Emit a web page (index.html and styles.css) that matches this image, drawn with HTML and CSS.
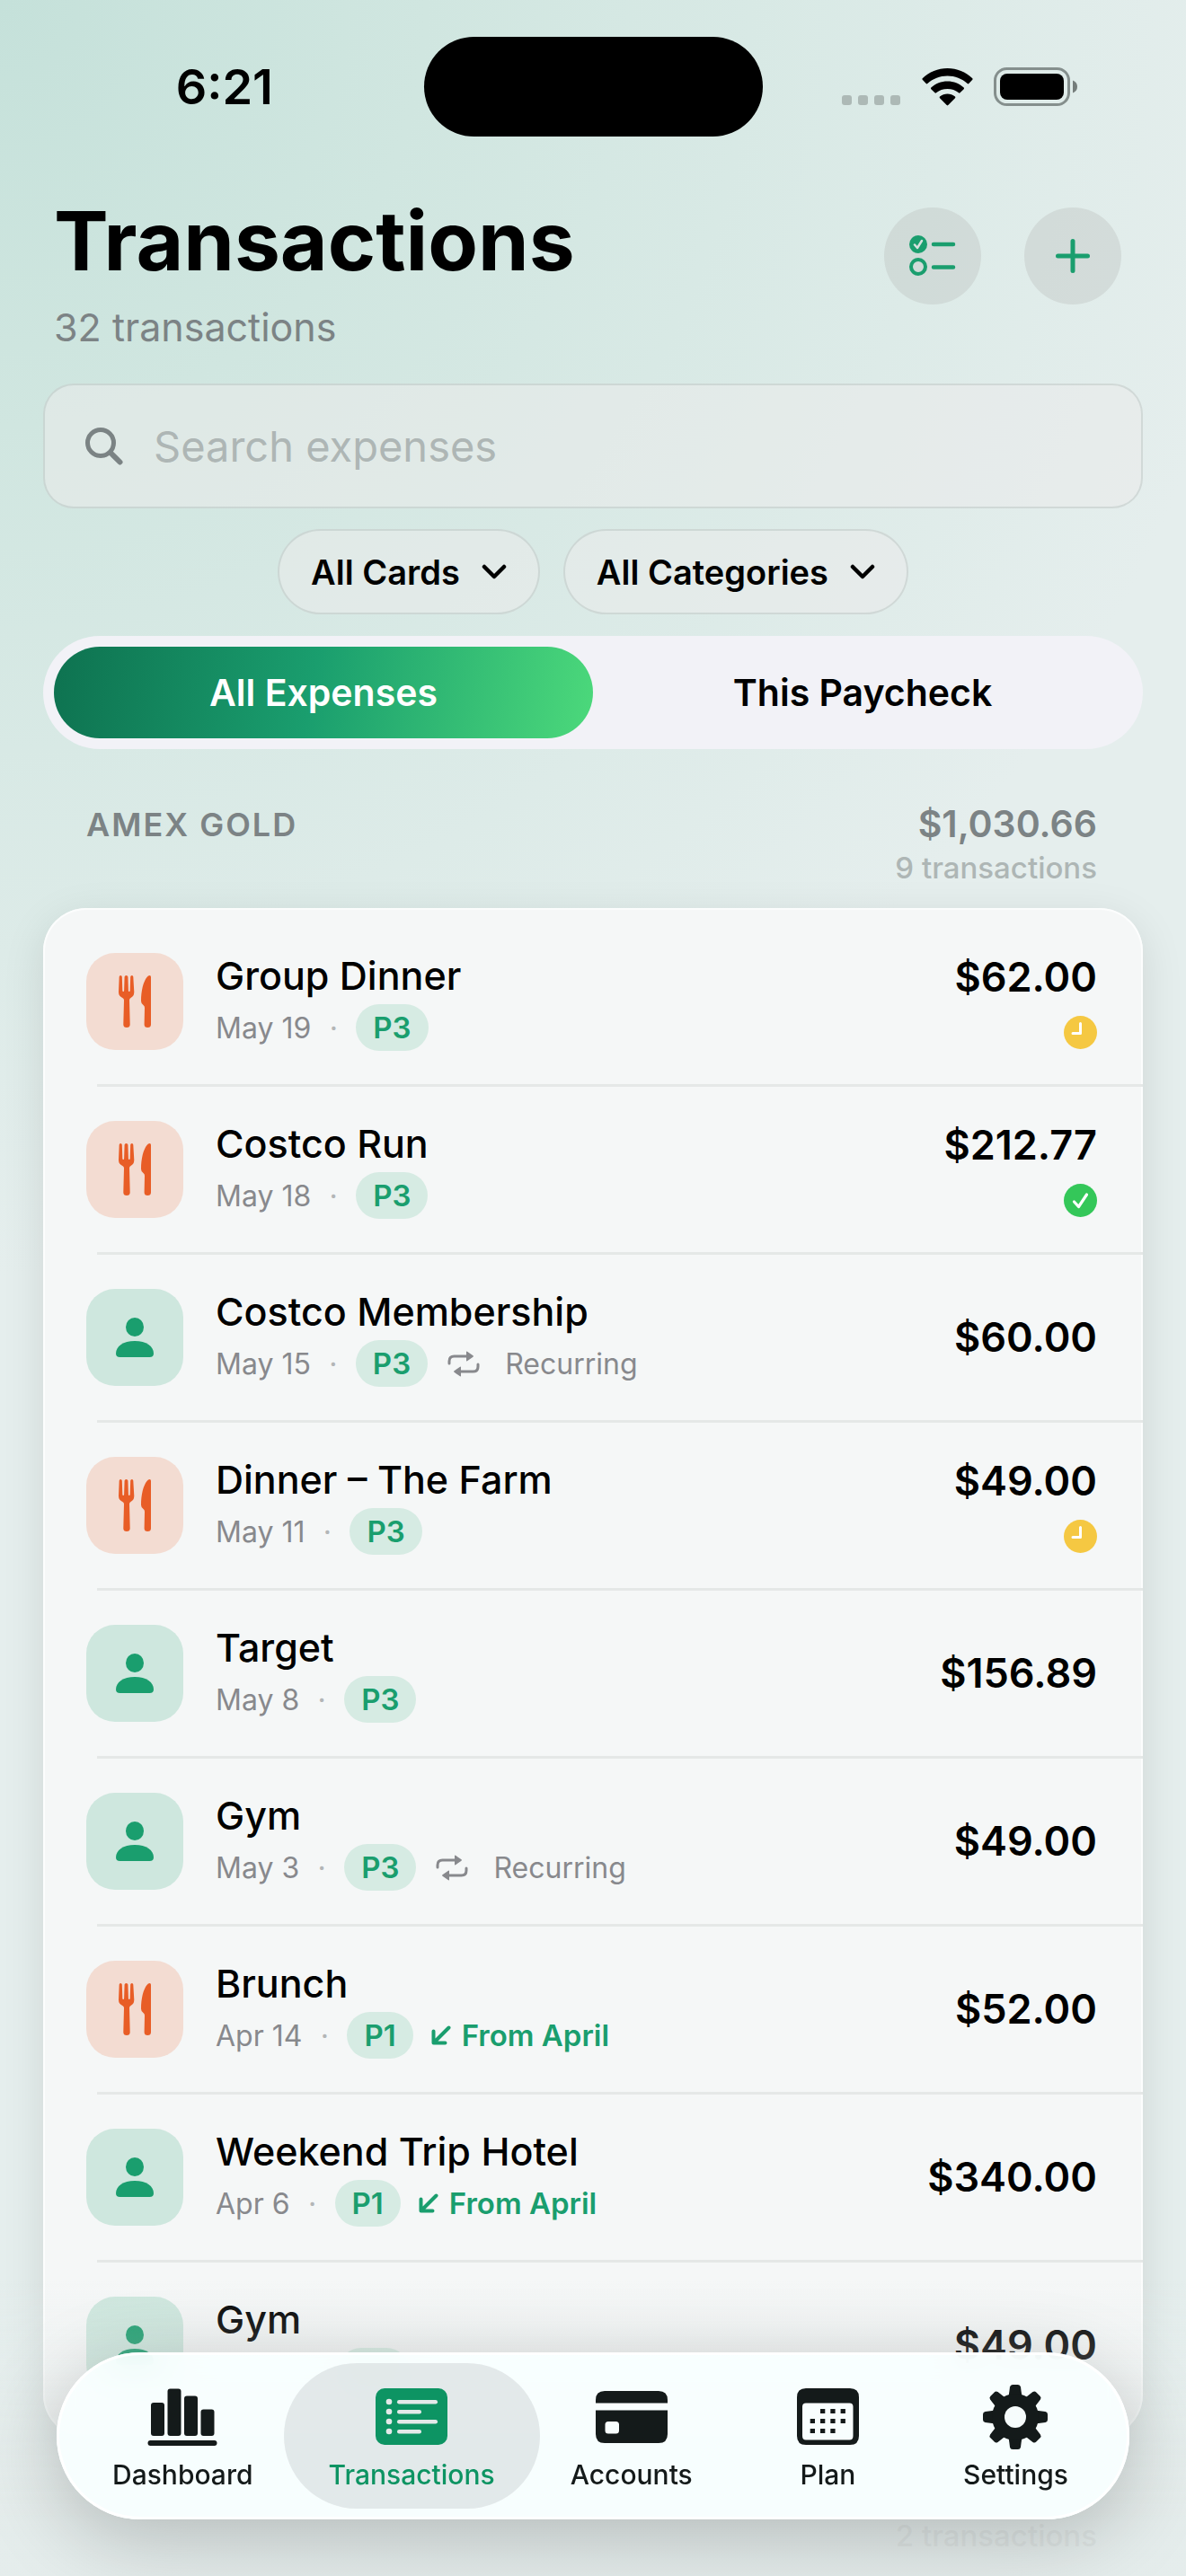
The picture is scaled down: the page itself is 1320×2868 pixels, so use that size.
FILE: index.html
```html
<!DOCTYPE html>
<html lang="en">
<head>
  <meta charset="UTF-8" />
  <title>Transactions</title>
  <meta name="viewport" content="width=device-width, initial-scale=1" />
  <link rel="stylesheet" href="styles.css">
</head>
<body>
  <!-- Icon sprite -->
  <svg class="sprite" aria-hidden="true">
    <symbol id="fork-knife" viewBox="0 0 36 58">
      <path d="M2.2 0Q3.6 0 3.8 1.600L4.300 17Q4.400 18 5.200 18Q6 18 6.100 17L6.600 1.600Q6.800 0 8.500 0Q10.200 0 10.400 1.600L10.900 17Q11 18 11.800 18Q12.600 18 12.700 17L13.200 1.600Q13.400 0 14.800 0Q16.200 0 16.300 1.600L17.300 18.500Q17.300 23 13.500 25Q12 25.800 12 27.500L12.700 54.500Q12.700 58 9 58Q5.300 58 5.300 54.500L6 27.500Q6 25.800 4.300 25Q0 23 0 18.500L.7 1.600Q.8 0 2.200 0Z" fill="currentColor"/>
      <path d="M34.500 0Q36 0 36 1.800V54.500Q36 58 32.300 58Q28.600 58 28.600 54.500L29 36Q29 34.200 27.500 33Q25 31.500 25 28.500C25 17 27.500 7 31.500 2Q33 0 34.500 0Z" fill="currentColor"/>
    </symbol>
    <symbol id="person" viewBox="0 0 42 44">
      <ellipse cx="21" cy="10.500" rx="10" ry="10.500" fill="currentColor"/>
      <path d="M4.500 44Q0 44 0 40C0 32 8 26 21 26S42 32 42 40Q42 44 37.500 44Z" fill="currentColor"/>
    </symbol>
    <symbol id="repeat" viewBox="0 0 36 29">
      <path d="M2 14V11.500Q2 6 7.500 6H22M34 15V17.500Q34 23 28.500 23H14" fill="none" stroke="currentColor" stroke-width="3" stroke-linecap="round"/>
      <path d="M21 1.200Q21 0 22 .7L28.500 5.300Q29.300 6 28.500 6.700L22 11.300Q21 12 21 10.800ZM15 18.200Q15 17 14 17.700L7.500 22.300Q6.700 23 7.500 23.700L14 28.300Q15 29 15 27.800Z" fill="currentColor"/>
    </symbol>
    <symbol id="arrow-dl" viewBox="0 0 22 22">
      <path d="M19.500 2.500L3 19M2.500 6.500V19.500H15.500" fill="none" stroke="currentColor" stroke-width="4" stroke-linecap="round" stroke-linejoin="round"/>
    </symbol>
    <symbol id="chevron" viewBox="0 0 28 18">
      <path d="M3 3L14 14L25 3" fill="none" stroke="currentColor" stroke-width="4.500" stroke-linecap="round" stroke-linejoin="round"/>
    </symbol>
    <symbol id="clock" viewBox="0 0 37 37">
      <circle cx="18.500" cy="18.500" r="18.500" fill="#f5c842"/>
      <path d="M18.500 8.500V19.500H10" fill="none" stroke="#fff" stroke-width="3" stroke-linecap="round" stroke-linejoin="round"/>
    </symbol>
    <symbol id="check" viewBox="0 0 37 37">
      <circle cx="18.500" cy="18.500" r="18.500" fill="#34c759"/>
      <path d="M11.500 20L16.500 25.500L25.500 12" fill="none" stroke="#fff" stroke-width="3.200" stroke-linecap="round" stroke-linejoin="round"/>
    </symbol>
  </svg>

  <div class="status-bar">
    <span class="time">6:21</span>
    <span class="island"></span>
    <span class="status-icons">
      <svg width="66" height="12" viewBox="0 0 66 12" class="cell"><g fill="#adb9b6"><rect width="11" height="11" rx="3"/><rect x="18" width="11" height="11" rx="3"/><rect x="36" width="11" height="11" rx="3"/><rect x="54" width="11" height="11" rx="3"/></g></svg>
      <svg width="57" height="42" viewBox="0 0 57 42"><path d="M28.500 0C39 0 49 4 56.300 11.200Q57 12 56.300 12.800L52.300 17Q51.500 17.800 50.700 17C44.500 11.500 37 8.500 28.500 8.500S12.500 11.500 6.300 17Q5.500 17.800 4.700 17L.7 12.800Q0 12 .7 11.200C8 4 18 0 28.500 0ZM28.500 14.500C35.500 14.500 41.700 17 46.700 21.500Q47.500 22.300 46.700 23.200L42.500 27.300Q41.700 28 41 27.300C37.500 24.500 33.300 23 28.500 23S19.500 24.500 16 27.300Q15.300 28 14.500 27.300L10.300 23.200Q9.500 22.300 10.300 21.500C15.300 17 21.500 14.500 28.500 14.500ZM28.500 28.500C31.700 28.500 34.500 29.600 37 31.500Q37.800 32.300 37 33.200L29.300 41Q28.500 41.800 27.700 41L20 33.200Q19.200 32.300 20 31.500C22.500 29.600 25.300 28.500 28.500 28.500Z"/></svg>
      <svg width="94" height="43" viewBox="0 0 94 43"><rect x="1.500" y="1.500" width="82" height="40" rx="13" fill="none" stroke="#858f8d" stroke-width="3"/><rect x="7" y="7" width="71" height="29" rx="8"/><path d="M88 14.500Q93 16.500 93 21.500T88 28.500Z" fill="#757d7b"/></svg>
    </span>
  </div>

  <main class="page">
    <header class="page-header">
      <div class="heading">
        <h1>Transactions</h1>
        <p>32 transactions</p>
      </div>
      <div class="actions">
        <button type="button" class="round-btn" aria-label="Select transactions">
          <svg width="54" height="46" viewBox="0 0 54 46"><circle cx="11" cy="10" r="10" fill="#1a9e6e"/><path d="M7 10.500L10 14L15 6" fill="none" stroke="#d6e1de" stroke-width="2.500" stroke-linecap="round" stroke-linejoin="round"/><circle cx="11" cy="35" r="8" fill="none" stroke="#1a9e6e" stroke-width="4"/><path d="M28 10H50M28 35.500H50" stroke="#1a9e6e" stroke-width="4.500" stroke-linecap="round"/></svg>
        </button>
        <button type="button" class="round-btn" aria-label="Add transaction">
          <svg width="38" height="38" viewBox="0 0 38 38"><path d="M19 2.500V35.500M2.500 19H35.500" stroke="#1a9e6e" stroke-width="5" stroke-linecap="round"/></svg>
        </button>
      </div>
    </header>

    <label class="search">
      <svg width="42" height="42" viewBox="0 0 42 42"><circle cx="17" cy="17" r="14.500" fill="none" stroke="#7b8384" stroke-width="5"/><path d="M28 28L38.500 38.500" stroke="#7b8384" stroke-width="6" stroke-linecap="round"/></svg>
      <input type="search" placeholder="Search expenses" aria-label="Search expenses">
    </label>

    <div class="filters">
      <button type="button" class="chip">All Cards <svg width="28" height="18"><use href="#chevron"/></svg></button>
      <button type="button" class="chip">All Categories <svg width="28" height="18"><use href="#chevron"/></svg></button>
    </div>

    <div class="segmented">
      <button type="button" class="segment active">All Expenses</button>
      <button type="button" class="segment">This Paycheck</button>
    </div>

    <section class="group">
      <div class="group-header">
        <h2>Amex Gold</h2>
        <div class="group-total">
          <strong>$1,030.66</strong>
          <span>9 transactions</span>
        </div>
      </div>
      <ul class="card">
        <li class="row">
          <span class="category food"><svg width="36" height="58"><use href="#fork-knife"/></svg></span>
          <div class="details">
            <h3>Group Dinner</h3>
            <p class="meta">May 19 <i>·</i> <b class="pill">P3</b></p>
          </div>
          <div class="amount">$62.00 <svg width="37" height="37"><use href="#clock"/></svg></div>
        </li>
        <li class="row">
          <span class="category food"><svg width="36" height="58"><use href="#fork-knife"/></svg></span>
          <div class="details">
            <h3>Costco Run</h3>
            <p class="meta">May 18 <i>·</i> <b class="pill">P3</b></p>
          </div>
          <div class="amount">$212.77 <svg width="37" height="37"><use href="#check"/></svg></div>
        </li>
        <li class="row">
          <span class="category personal"><svg width="42" height="44"><use href="#person"/></svg></span>
          <div class="details">
            <h3>Costco Membership</h3>
            <p class="meta">May 15 <i>·</i> <b class="pill">P3</b> <span class="recurring"><svg width="36" height="29"><use href="#repeat"/></svg> Recurring</span></p>
          </div>
          <div class="amount">$60.00</div>
        </li>
        <li class="row">
          <span class="category food"><svg width="36" height="58"><use href="#fork-knife"/></svg></span>
          <div class="details">
            <h3>Dinner – The Farm</h3>
            <p class="meta">May 11 <i>·</i> <b class="pill">P3</b></p>
          </div>
          <div class="amount">$49.00 <svg width="37" height="37"><use href="#clock"/></svg></div>
        </li>
        <li class="row">
          <span class="category personal"><svg width="42" height="44"><use href="#person"/></svg></span>
          <div class="details">
            <h3>Target</h3>
            <p class="meta">May 8 <i>·</i> <b class="pill">P3</b></p>
          </div>
          <div class="amount">$156.89</div>
        </li>
        <li class="row">
          <span class="category personal"><svg width="42" height="44"><use href="#person"/></svg></span>
          <div class="details">
            <h3>Gym</h3>
            <p class="meta">May 3 <i>·</i> <b class="pill">P3</b> <span class="recurring"><svg width="36" height="29"><use href="#repeat"/></svg> Recurring</span></p>
          </div>
          <div class="amount">$49.00</div>
        </li>
        <li class="row">
          <span class="category food"><svg width="36" height="58"><use href="#fork-knife"/></svg></span>
          <div class="details">
            <h3>Brunch</h3>
            <p class="meta">Apr 14 <i>·</i> <b class="pill">P1</b> <span class="from"><svg width="22" height="22"><use href="#arrow-dl"/></svg> From April</span></p>
          </div>
          <div class="amount">$52.00</div>
        </li>
        <li class="row">
          <span class="category personal"><svg width="42" height="44"><use href="#person"/></svg></span>
          <div class="details">
            <h3>Weekend Trip Hotel</h3>
            <p class="meta">Apr 6 <i>·</i> <b class="pill">P1</b> <span class="from"><svg width="22" height="22"><use href="#arrow-dl"/></svg> From April</span></p>
          </div>
          <div class="amount">$340.00</div>
        </li>
        <li class="row">
          <span class="category personal"><svg width="42" height="44"><use href="#person"/></svg></span>
          <div class="details">
            <h3>Gym</h3>
            <p class="meta"><b class="pill last"></b></p>
          </div>
          <div class="amount">$49.00</div>
        </li>
      </ul>
    </section>

    <section class="group">
      <div class="group-header">
        <div class="group-total">
          <strong></strong>
          <span>2 transactions</span>
        </div>
      </div>
    </section>
  </main>

  <div class="bottom-fade"></div>

  <nav class="tab-bar">
    <a href="#dashboard" class="tab">
      <svg width="78" height="72" viewBox="0 0 78 72"><g fill="currentColor"><rect x="4" y="20" width="15" height="37" rx="3"/><rect x="22.500" y="4.500" width="15" height="52.500" rx="3"/><rect x="41" y="12.500" width="15" height="44.500" rx="3"/><rect x="59.500" y="27.500" width="15" height="29.500" rx="3"/><rect x=".5" y="62" width="77" height="6" rx="3"/></g></svg>
      Dashboard
    </a>
    <a href="#transactions" class="tab active">
      <svg width="80" height="72" viewBox="0 0 80 72"><rect y="4" width="80" height="63" rx="10" fill="currentColor"/><g fill="#e3e9e9"><circle cx="15" cy="19" r="3.300"/><circle cx="15" cy="30" r="3.300"/><circle cx="15" cy="41" r="3.300"/><circle cx="15" cy="52" r="3.300"/><rect x="24" y="17" width="45" height="4.500" rx="2.200"/><rect x="24" y="28" width="27" height="4.500" rx="2.200"/><rect x="24" y="39" width="45" height="4.500" rx="2.200"/><rect x="24" y="50" width="27" height="4.500" rx="2.200"/></g></svg>
      Transactions
    </a>
    <a href="#accounts" class="tab">
      <svg width="80" height="72" viewBox="0 0 80 72"><path d="M0 20.500V17Q0 7 10 7H70Q80 7 80 17V20.500ZM0 28.500H80V55Q80 65 70 65H10Q0 65 0 55ZM14 41Q10.500 41 10.500 44.500V51Q10.500 54.500 14 54.500H22.500Q26 54.500 26 51V44.500Q26 41 22.500 41Z" fill="currentColor" fill-rule="evenodd"/></svg>
      Accounts
    </a>
    <a href="#plan" class="tab plan">
      <svg width="69" height="72" viewBox="0 0 69 72"><path d="M10 4H59Q69 4 69 14V57Q69 67 59 67H10Q0 67 0 57V14Q0 4 10 4ZM10 20.500Q6 20.500 6 24.500V57Q6 61.500 10 61.500H58.500Q62.500 61.500 62.500 57V24.500Q62.500 20.500 58.500 20.500Z" fill="currentColor" fill-rule="evenodd"/><path d="M26 29.500H55M14.700 40.500H55M14.700 51.500H43" stroke="currentColor" stroke-width="5" stroke-dasharray="5.300 6"/></svg>
      Plan
    </a>
    <a href="#settings" class="tab">
      <svg width="72" height="72" viewBox="0 0 72 72"><g fill="currentColor"><path d="M28.500 14L30 2.500Q30.500 0 33 0H39Q41.500 0 42 2.500L43.500 14V58L42 69.500Q41.500 72 39 72H33Q30.500 72 30 69.500L28.500 58Z" id="tooth"/><use href="#tooth" transform="rotate(45 36 36)"/><use href="#tooth" transform="rotate(90 36 36)"/><use href="#tooth" transform="rotate(135 36 36)"/><circle cx="36" cy="36" r="26"/></g><circle cx="36" cy="36" r="12" fill="#f6fcfc"/></svg>
      Settings
    </a>
  </nav>
</body>
</html>
```
FILE: styles.css
```css
:root {
  --green: #1a9e6e;
  --text: #000;
  --gray: #7c8385;
  --meta: #88898d;
  --light: #aeb6b5;
  --line: #e5e8e7;
}

* {
  box-sizing: border-box;
  margin: 0;
  padding: 0;
}

body {
  font-family: Inter, 'Liberation Sans', sans-serif;
  color: var(--text);
  min-height: 100vh;
  background: radial-gradient(circle at 0 0, #c5e1da 0%, #d0e6e0 22%, #e5eeed 66%, #e5eeed 100%) no-repeat 0 0 / 100% 1700px #e5eeed;
}

button,
input {
  font-family: inherit;
  color: inherit;
  border: none;
  background: none;
}

button {
  cursor: pointer;
}

svg {
  flex-shrink: 0;
}

.sprite {
  position: absolute;
  width: 0;
  height: 0;
}

/* Status bar */
.status-bar {
  display: grid;
  grid-template-columns: 1fr 377px 1fr;
  align-items: center;
  padding-top: 41px;
}

.time {
  padding-left: 28px;
  text-align: center;
  font-size: 54px;
  line-height: 64px;
  font-weight: 600;
}

.island {
  height: 111px;
  border-radius: 56px;
  background: #000;
}

.status-icons {
  display: flex;
  align-items: center;
  justify-content: center;
  gap: 23px;
  padding-right: 32px;
}

.cell {
  margin-top: 30px;
}

/* Header */
.page {
  padding: 0 48px;
}

.page-header {
  display: flex;
  justify-content: space-between;
  padding: 61px 24px 0 12px;
}

h1 {
  font-size: 91px;
  line-height: 110px;
  font-weight: 700;
}

.heading p {
  margin-top: 13px;
  font-size: 43px;
  line-height: 56px;
  color: var(--gray);
}

.actions {
  display: flex;
  gap: 48px;
  padding-top: 18px;
}

.round-btn {
  display: flex;
  align-items: center;
  justify-content: center;
  width: 108px;
  height: 108px;
  border-radius: 50%;
  background: rgba(190, 195, 193, 0.4);
}

.search {
  display: flex;
  align-items: center;
  gap: 34px;
  height: 139px;
  margin-top: 35px;
  padding: 0 45px;
  border: 2px solid rgba(120, 140, 135, 0.2);
  border-radius: 34px;
  background: rgba(235, 235, 235, 0.55);
}

.search input {
  flex: 1;
  min-width: 0;
  font-size: 47px;
  outline: none;
}

.search input::placeholder {
  color: var(--light);
}

.filters {
  display: flex;
  justify-content: center;
  gap: 26px;
  margin-top: 23px;
}

.chip {
  display: flex;
  align-items: center;
  gap: 24px;
  height: 95px;
  padding: 0 35px;
  border: 2px solid rgba(120, 140, 135, 0.2);
  border-radius: 48px;
  background: rgba(235, 235, 235, 0.55);
  font-size: 38px;
  font-weight: 600;
}

.segmented {
  display: flex;
  margin-top: 24px;
  padding: 12px;
  border-radius: 63px;
  background: #f2f2f7;
}

.segment {
  flex: 1;
  height: 102px;
  border-radius: 51px;
  font-size: 41px;
  font-weight: 600;
}

.segment.active {
  color: #fff;
  background: linear-gradient(100deg, #0e7250 0%, #1a9e6e 48%, #4cd97b 100%);
}

/* Transaction groups */
.segmented + .group {
  margin-top: 23px;
}

.group-header {
  display: flex;
  justify-content: space-between;
  padding: 36px 51px 25px 48px;
}

.group:last-child .group-header {
  padding-bottom: 0;
}

h2 {
  font-size: 36px;
  line-height: 50px;
  font-weight: 600;
  letter-spacing: 2px;
  text-transform: uppercase;
  color: var(--gray);
}

.group-total {
  display: flex;
  flex-direction: column;
  gap: 5px;
  margin-left: auto;
  text-align: right;
}

.group-total strong {
  height: 48px;
  font-size: 41px;
  line-height: 48px;
  font-weight: 600;
  color: var(--gray);
}

.group-total span {
  font-size: 33px;
  line-height: 40px;
  font-weight: 500;
  color: var(--light);
}

.card {
  list-style: none;
  padding: 12px 0 8px;
  border-radius: 48px;
  background: #f5f7f7;
  box-shadow: 0 12px 48px rgba(0, 0, 0, 0.1), inset 0 0 0 2px #fcfdfd;
}

.row {
  display: flex;
  align-items: center;
  gap: 36px;
  height: 187px;
  padding: 0 51px 3px 48px;
}

/* divider starts slightly inside the category tile */
.row:not(:last-child) {
  background: linear-gradient(var(--line), var(--line)) no-repeat 60px 100% / 100% 3px;
}

.category {
  display: flex;
  align-items: center;
  justify-content: center;
  width: 108px;
  height: 108px;
  border-radius: 32px;
}

.food {
  color: #e85d26;
  background: #f3dcd2;
}

.personal {
  color: var(--green);
  background: #cee7de;
}

.details {
  flex: 1;
}

h3 {
  font-size: 43px;
  line-height: 52px;
  font-weight: 500;
}

.meta {
  display: flex;
  align-items: center;
  height: 52px;
  margin-top: 6px;
  font-size: 32px;
  color: var(--meta);
}

.meta i {
  width: 50px;
  text-align: center;
  font-style: normal;
  color: #b3b6b7;
}

.pill {
  height: 52px;
  padding: 0 19px;
  border-radius: 26px;
  background: #d6ebe3;
  font-size: 33px;
  line-height: 52px;
  font-weight: 600;
  color: var(--green);
}

.pill.last {
  width: 80px;
  margin-left: 136px;
}

.recurring,
.from {
  display: flex;
  align-items: center;
}

.recurring {
  gap: 28px;
  margin-left: 22px;
}

.from {
  gap: 12px;
  margin-left: 20px;
  font-size: 33px;
  font-weight: 600;
  color: var(--green);
}

.amount {
  display: flex;
  flex-direction: column;
  align-items: flex-end;
  gap: 17px;
  font-size: 45px;
  line-height: 52px;
  font-weight: 600;
}

/* Tab bar */
.bottom-fade {
  position: fixed;
  left: 0;
  right: 0;
  bottom: 0;
  height: 330px;
  background: linear-gradient(rgba(229, 236, 235, 0) 0%, rgba(229, 236, 235, 0.25) 30%, rgba(229, 236, 235, 0.85) 80%);
}

.tab-bar {
  position: fixed;
  left: 63px;
  right: 63px;
  bottom: 63px;
  display: flex;
  justify-content: space-between;
  height: 186px;
  padding: 12px 26px 12px 20px;
  border-radius: 93px;
  background: rgba(249, 255, 255, 0.92);
  backdrop-filter: blur(14px);
  box-shadow: 0 20px 90px rgba(0, 0, 0, 0.22), inset 0 0 0 3px #fff;
}

.tab {
  display: flex;
  flex-direction: column;
  align-items: center;
  gap: 10px;
  height: 162px;
  padding: 24px 42px 0;
  border-radius: 81px;
  color: #141a1a;
  font-size: 30px;
  line-height: 36px;
  font-weight: 500;
  text-decoration: none;
}

.tab.plan {
  padding: 24px 74px 0;
}

.tab.active {
  margin: 0 -8px;
  padding: 24px 50px 0;
  color: #0d9463;
  background: rgba(205, 212, 213, 0.5);
}
```
